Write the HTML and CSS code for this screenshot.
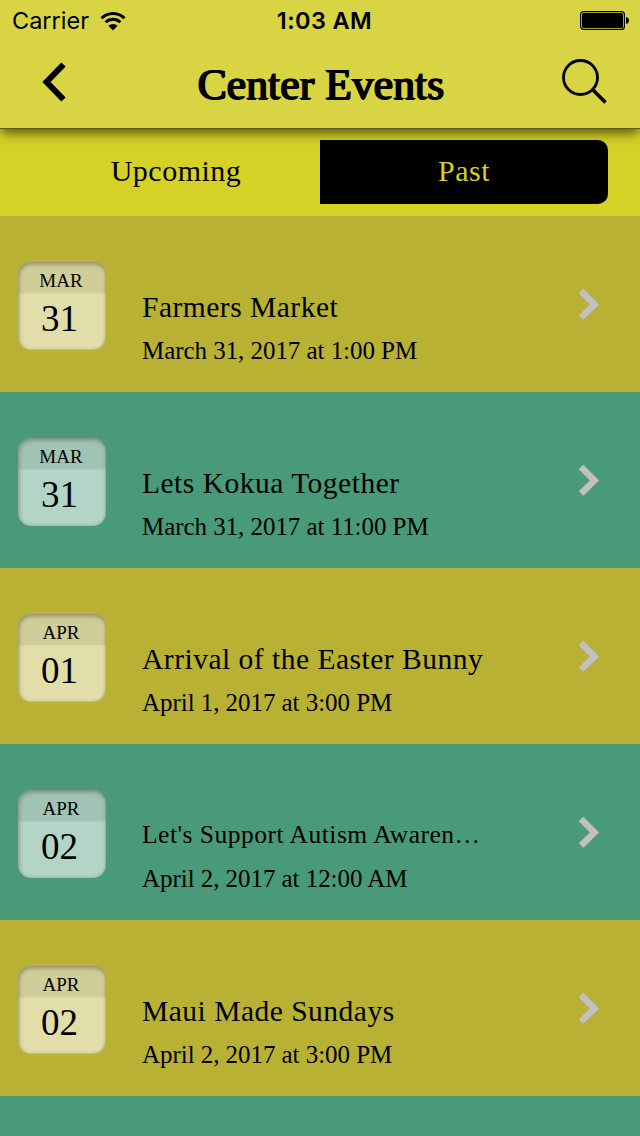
FILE: index.html
```html
<!DOCTYPE html>
<html lang="en">
<head>
    <meta charset="UTF-8">
    <meta name="viewport" content="width=device-width, initial-scale=1.0">
    <title>Center Events</title>
    <link rel="stylesheet" href="styles.css">
</head>
<body>
    <header class="header">
        <div class="status-bar">
            <div class="carrier">
                <span>Carrier</span>
                <svg width="26" height="19" viewBox="0 0 26 19">
                    <path d="M1.5 6.2a16.4 16.4 0 0 1 23 0M5.6 10.3a10.6 10.6 0 0 1 14.8 0" fill="none" stroke="#000" stroke-width="3"/>
                    <path d="M13 18.5l-4.6-4.7a6.6 6.6 0 0 1 9.2 0z"/>
                </svg>
            </div>
            <div class="time">1:03 AM</div>
            <svg class="battery" width="49" height="20" viewBox="0 0 49 20">
                <rect x="0.6" y="0.6" width="43.8" height="17.8" rx="3" fill="none" stroke="#000" stroke-width="1.2"/>
                <rect x="2" y="2" width="41" height="15" rx="1.5"/>
                <path d="M46 6c4 .5 4 6.500 0 7z"/>
            </svg>
        </div>
        <div class="nav-bar">
            <svg width="26" height="42" viewBox="0 0 26 42">
                <path d="M21.500 3.500L4.500 21l17 17.500" fill="none" stroke="#000" stroke-width="6"/>
            </svg>
            <h1>Center Events</h1>
            <svg width="46" height="46" viewBox="0 0 46 46">
                <circle cx="19.500" cy="18.500" r="17" fill="none" stroke="#000" stroke-width="2.800"/>
                <path d="M31.500 30.500l13 13" stroke="#000" stroke-width="3.500"/>
            </svg>
        </div>
    </header>

    <div class="tabs">
        <div class="tab upcoming">Upcoming</div>
        <div class="tab past">Past</div>
    </div>

    <div class="events">
        <div class="event">
            <div class="badge"><div class="month">MAR</div><div class="day">31</div></div>
            <div class="info">
                <h2>Farmers Market</h2>
                <p>March 31, 2017 at 1:00 PM</p>
            </div>
            <svg class="arrow" width="22" height="32" viewBox="0 0 22 32"><path d="M3 3l13.500 13.500-13.500 13"/></svg>
        </div>
        <div class="event">
            <div class="badge"><div class="month">MAR</div><div class="day">31</div></div>
            <div class="info">
                <h2>Lets Kokua Together</h2>
                <p>March 31, 2017 at 11:00 PM</p>
            </div>
            <svg class="arrow" width="22" height="32" viewBox="0 0 22 32"><path d="M3 3l13.500 13.500-13.500 13"/></svg>
        </div>
        <div class="event">
            <div class="badge"><div class="month">APR</div><div class="day">01</div></div>
            <div class="info">
                <h2>Arrival of the Easter Bunny</h2>
                <p>April 1, 2017 at 3:00 PM</p>
            </div>
            <svg class="arrow" width="22" height="32" viewBox="0 0 22 32"><path d="M3 3l13.500 13.500-13.500 13"/></svg>
        </div>
        <div class="event">
            <div class="badge"><div class="month">APR</div><div class="day">02</div></div>
            <div class="info">
                <h2 class="small">Let's Support Autism Awaren…</h2>
                <p>April 2, 2017 at 12:00 AM</p>
            </div>
            <svg class="arrow" width="22" height="32" viewBox="0 0 22 32"><path d="M3 3l13.500 13.500-13.500 13"/></svg>
        </div>
        <div class="event">
            <div class="badge"><div class="month">APR</div><div class="day">02</div></div>
            <div class="info">
                <h2>Maui Made Sundays</h2>
                <p>April 2, 2017 at 3:00 PM</p>
            </div>
            <svg class="arrow" width="22" height="32" viewBox="0 0 22 32"><path d="M3 3l13.500 13.500-13.500 13"/></svg>
        </div>
        <div class="event next"></div>
    </div>
</body>
</html>
```
FILE: styles.css
```css
* {
    box-sizing: border-box;
}
body {
    margin: 0;
    width: 640px;
    height: 1136px;
    overflow: hidden;
    font-family: Palatino, "Liberation Serif", serif;
    color: #000;
    background: #d5d127;
}
h1, h2, p {
    margin: 0;
    font-weight: normal;
    white-space: nowrap;
}
.header {
    position: relative;
    height: 129px;
    background: #d8d444;
    border-bottom: 1px solid #5f5d1c;
    box-shadow: 0 5px 11px -1px rgba(0, 0, 0, 0.6);
}
.status-bar {
    display: grid;
    grid-template-columns: 1fr auto 1fr;
    height: 41px;
    padding: 1px 11px 0 12px;
    align-items: center;
    font-family: Inter, "Liberation Sans", sans-serif;
    font-size: 23.5px;
    line-height: 40px;
}
.carrier {
    display: flex;
    align-items: center;
    gap: 11px;
}
.time {
    padding-left: 8px;
    font-weight: 600;
    letter-spacing: 0.4px;
}
.battery {
    justify-self: end;
}
.nav-bar {
    display: flex;
    height: 87px;
    padding: 0 33px 5px 42px;
    align-items: center;
    justify-content: space-between;
}
.nav-bar h1 {
    padding: 4px 0 0 11px;
    font-size: 43.5px;
    letter-spacing: 0.1px;
    text-shadow: 2px 0 0 #000, 1px 1px 0 #000;
}
.tabs {
    display: flex;
    height: 87px;
    padding: 11px 32px 12px;
}
.tab {
    flex: 1;
    height: 64px;
    font-size: 30px;
    line-height: 61px;
    text-align: center;
    letter-spacing: 0.5px;
}
.past {
    color: #d5d127;
    background: #000;
    border-radius: 0 10px 10px 0;
}
.event {
    display: flex;
    height: 176px;
    padding: 46px 40px 0 18px;
    background: #b8b133;
}
.event:nth-child(even) {
    background: #499a79;
}
.event.next {
    height: 40px;
    padding: 0;
}
.badge {
    width: 88px;
    height: 88px;
    border-radius: 13px;
    text-align: center;
    background: linear-gradient(rgba(225, 225, 225, 0.58) 31px, rgba(255, 255, 255, 0.58) 32px);
    box-shadow: inset 1px 2px 4px rgba(80, 80, 70, 0.5), inset -1px -1px 2px rgba(120, 120, 90, 0.25);
}
.month {
    height: 32px;
    padding: 3px 2px 0 0;
    font-size: 19px;
    line-height: 32px;
}
.day {
    padding: 1px 5px 0 0;
    font-size: 37px;
    line-height: 48px;
}
.info {
    flex: 1;
    padding: 23px 0 0 36px;
}
.info h2 {
    font-size: 29.5px;
    line-height: 44px;
    letter-spacing: 0.5px;
}
.info h2.small {
    font-size: 25.5px;
    letter-spacing: 0.5px;
}
.info p {
    font-size: 25px;
    line-height: 44px;
    letter-spacing: -0.05px;
}
.arrow {
    margin-top: 26px;
}
.arrow path {
    fill: none;
    stroke: #c1c1c1;
    stroke-width: 6.5;
}
```
